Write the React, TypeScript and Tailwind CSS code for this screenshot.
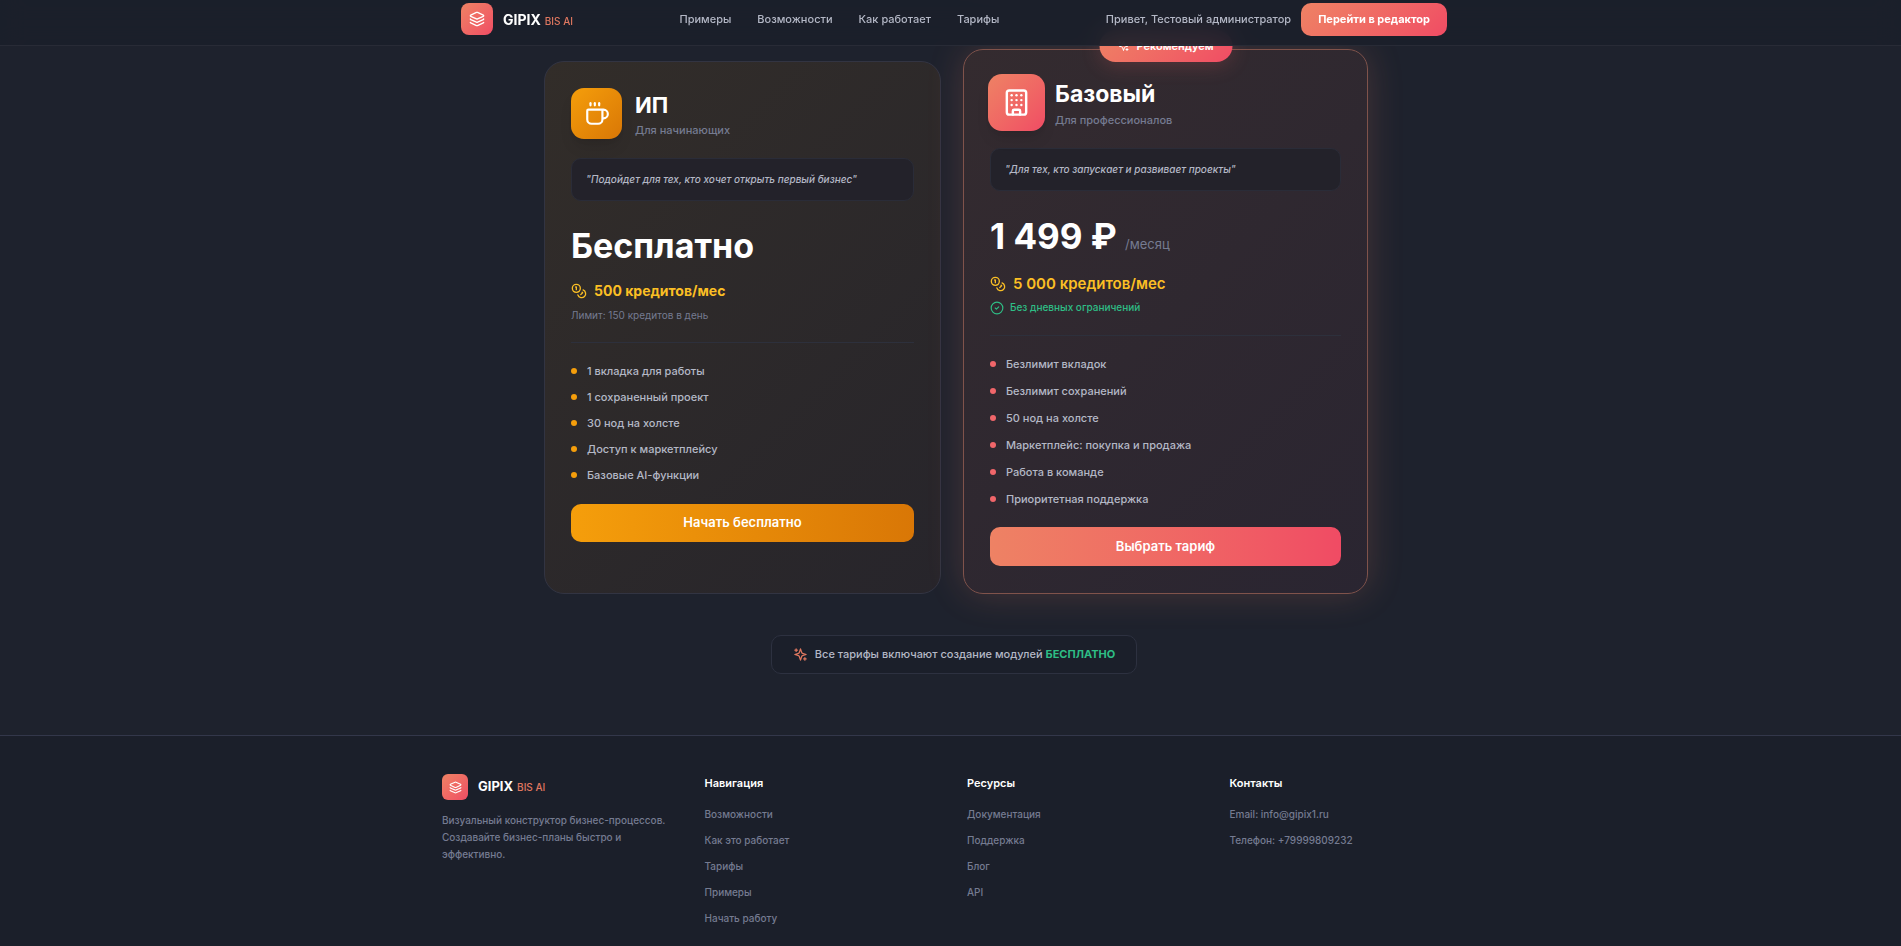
import { Building, CircleCheck, Coffee, Coins, Layers } from "lucide-react";

const navLinks = ["Примеры", "Возможности", "Как работает", "Тарифы"];

const footerColumns = [
  {
    title: "Навигация",
    items: ["Возможности", "Как это работает", "Тарифы", "Примеры", "Начать работу"],
  },
  { title: "Ресурсы", items: ["Документация", "Поддержка", "Блог", "API"] },
  {
    title: "Контакты",
    items: ["Email: info@gipix1.ru", "Телефон: +79999809232"],
  },
];

const freeFeatures = [
  "1 вкладка для работы",
  "1 сохраненный проект",
  "30 нод на холсте",
  "Доступ к маркетплейсу",
  "Базовые AI-функции",
];

const baseFeatures = [
  "Безлимит вкладок",
  "Безлимит сохранений",
  "50 нод на холсте",
  "Маркетплейс: покупка и продажа",
  "Работа в команде",
  "Приоритетная поддержка",
];

export default function App() {
  return (
    <div className="min-h-screen overflow-x-clip bg-[#1e222d] font-['Inter',sans-serif] text-[11px] text-[#b4b8c6]">
      <Header />
      <main className="pl-[7px] pt-[3px]">
        <section className="mx-auto grid max-w-[828px] grid-cols-[397fr_405fr] gap-[22px] pl-1">
          <FreePlan />
          <BasePlan />
        </section>
        <div className="mt-[41px] mb-[61px] flex justify-center">
          <p className="flex h-[39px] items-center gap-[7px] rounded-[10px] border border-[#2d3140] bg-[#1b1f2a] px-[21px] font-medium">
            <Sparkles className="size-[15px] text-[#e07860]" />
            <span>
              Все тарифы включают создание модулей{" "}
              <strong className="font-bold text-[#2ebd85]">БЕСПЛАТНО</strong>
            </span>
          </p>
        </div>
      </main>
      <Footer />
    </div>
  );
}

function Header() {
  return (
    <header className="sticky top-0 z-10 h-[46px] border-b border-[#282b36] bg-[#1b1f2a]/90 pb-[7px] pl-[7px] backdrop-blur-md">
      <div className="mx-auto flex h-full max-w-[986px] items-center justify-between">
        <a href="#" className="flex items-center gap-[10px]">
          <span className="flex size-8 items-center justify-center rounded-[8px] bg-linear-135 from-[#ee8264] to-[#f04b64] text-white">
            <Layers size={16} />
          </span>
          <Brand size="text-[14px]" />
        </a>
        <nav className="flex gap-[26px] font-medium">
          {navLinks.map((link) => (
            <a key={link} href="#">
              {link}
            </a>
          ))}
        </nav>
        <div className="flex items-center gap-[10px]">
          <span className="font-medium">Привет, Тестовый администратор</span>
          <button className="h-[33px] rounded-[10px] bg-linear-135 from-[#ee8264] to-[#f04b64] px-[17px] font-bold text-white">
            Перейти в редактор
          </button>
        </div>
      </div>
    </header>
  );
}

function Brand({ size }: { size: string }) {
  return (
    <span className="flex items-baseline gap-1">
      <span className={`${size} font-bold text-white`}>GIPIX</span>
      <span className="text-[10px] font-medium text-[#e07860]">BIS AI</span>
    </span>
  );
}

function Sparkles({ className }: { className: string }) {
  return (
    <svg
      viewBox="0 0 24 24"
      fill="none"
      stroke="currentColor"
      strokeWidth="2"
      strokeLinecap="round"
      strokeLinejoin="round"
      className={className}
    >
      <path d="m12 3-1.9 5.8a2 2 0 0 1-1.3 1.3L3 12l5.8 1.9a2 2 0 0 1 1.3 1.3L12 21l1.9-5.8a2 2 0 0 1 1.3-1.3L21 12l-5.8-1.9a2 2 0 0 1-1.3-1.3Z" />
      <path d="M5 3v4M3 5h4M19 17v4M17 19h4" />
    </svg>
  );
}

function FreePlan() {
  return (
    <article className="mt-3 rounded-[20px] border border-[#323442] bg-linear-135 from-[#322d29] to-[#27252b] p-[26px]">
      <div className="mb-[19px] flex items-center gap-[13px]">
        <div className="flex size-[51px] items-center justify-center rounded-[13px] bg-linear-135 from-[#f59e0b] to-[#d97706] text-white shadow-lg">
          <Coffee size={26} />
        </div>
        <div>
          <h3 className="pt-[3px] text-[22px]/[28px] font-bold text-white">ИП</h3>
          <p className="mt-[3px] font-medium text-[#757b91]">Для начинающих</p>
        </div>
      </div>
      <Quote>"Подойдет для тех, кто хочет открыть первый бизнес"</Quote>
      <p className="mt-[25px] mb-[15px] text-[34px]/[40px] font-bold text-white">Бесплатно</p>
      <Credits size="text-[14px]/[20px] font-bold">500 кредитов/мес</Credits>
      <p className="mt-[6px] text-[10px]/[16px] text-[#757b91]">Лимит: 150 кредитов в день</p>
      <Features items={freeFeatures} dot="bg-[#f59e0b]" gap="gap-2" />
      <button className="mt-5 h-[38px] w-full rounded-[10px] bg-linear-to-r from-[#f59e0b] to-[#d97706] text-[13px] font-semibold text-white">
        Начать бесплатно
      </button>
    </article>
  );
}

function BasePlan() {
  return (
    <article className="relative rounded-[20px] border border-[#80534b] bg-linear-135 from-[#342b2f] to-[#2a2531] px-[26px] pt-6 pb-[27px] shadow-[0_0_36px_rgba(240,130,100,0.2)]">
      <span className="absolute -top-[20px] left-1/2 flex h-8 w-[133px] -translate-x-1/2 items-center justify-center gap-[7px] rounded-full bg-linear-135 from-[#ee8264] to-[#f04b64] font-semibold text-white shadow-[0_4px_20px_rgba(240,100,100,0.2)]">
        <Sparkles className="size-3" />
        Рекомендуем
      </span>
      <div className="-ml-[2px] mb-[17px] flex items-center gap-[10px]">
        <div className="flex size-[57px] items-center justify-center rounded-[14px] bg-linear-135 from-[#ee8264] to-[#f04b64] text-white shadow-lg">
          <Building size={29} />
        </div>
        <div>
          <h3 className="pt-[3px] text-[23px]/[28px] font-bold text-white">Базовый</h3>
          <p className="mt-[4px] font-medium text-[#757b91]">Для профессионалов</p>
        </div>
      </div>
      <Quote>"Для тех, кто запускает и развивает проекты"</Quote>
      <p className="mt-[25px] mb-[10px] text-[35px]/[40px] font-bold text-white">
        1 499 ₽ <span className="text-[13px] font-normal text-[#757b91]">/месяц</span>
      </p>
      <Credits size="text-[15px]/[20px] font-semibold">5 000 кредитов/мес</Credits>
      <p className="mt-[5px] flex items-center gap-[6px] text-[10px]/[17px] font-medium text-[#2ebd85]">
        <CircleCheck size={14} />
        Без дневных ограничений
      </p>
      <Features items={baseFeatures} dot="bg-[#f0666a]" gap="gap-[9px]" />
      <button className="mt-[19px] h-[39px] w-full rounded-[10px] bg-linear-to-r from-[#ee8264] to-[#f04b64] text-[13px] font-semibold text-white">
        Выбрать тариф
      </button>
    </article>
  );
}

function Quote({ children }: { children: React.ReactNode }) {
  return (
    <p className="flex h-[43px] items-center rounded-[10px] border border-[#2a2c38] bg-[#23222a] px-[14px] text-[10px] font-medium italic">
      {children}
    </p>
  );
}

function Credits({ size, children }: { size: string; children: React.ReactNode }) {
  return (
    <p className={`flex items-center gap-[7px] text-[#fbbf24] ${size}`}>
      <Coins size={16} />
      {children}
    </p>
  );
}

function Features({ items, dot, gap }: { items: string[]; dot: string; gap: string }) {
  return (
    <ul className={`mt-[19px] flex flex-col border-t border-[#2d303c] pt-[19px] ${gap}`}>
      {items.map((item) => (
        <li key={item} className="flex items-center gap-[10px] leading-[18px] font-medium">
          <span className={`size-[6px] rounded-full ${dot}`} />
          {item}
        </li>
      ))}
    </ul>
  );
}

function Footer() {
  return (
    <footer className="border-t border-[#33374a] bg-[#1b1f2a] pt-[38px] pb-6 pl-[7px] text-[10px] font-medium text-[#757b91]">
      <div className="mx-auto grid max-w-[1024px] grid-cols-4 gap-[26px]">
        <div>
          <a href="#" className="flex items-center gap-[10px]">
            <span className="flex size-[26px] items-center justify-center rounded-[6px] bg-linear-135 from-[#ee8264] to-[#f04b64] text-white">
              <Layers size={13} />
            </span>
            <Brand size="text-[13px]" />
          </a>
          <p className="mt-3 leading-[17px]">
            Визуальный конструктор бизнес-процессов. Создавайте бизнес-планы быстро и
            эффективно.
          </p>
        </div>
        {footerColumns.map((column) => (
          <div key={column.title}>
            <h4 className="text-[11px]/[18px] font-semibold text-white">{column.title}</h4>
            <ul className="mt-[14px] flex flex-col gap-[9px] leading-[17px]">
              {column.items.map((item) => (
                <li key={item}>
                  <a href="#">{item}</a>
                </li>
              ))}
            </ul>
          </div>
        ))}
      </div>
    </footer>
  );
}
